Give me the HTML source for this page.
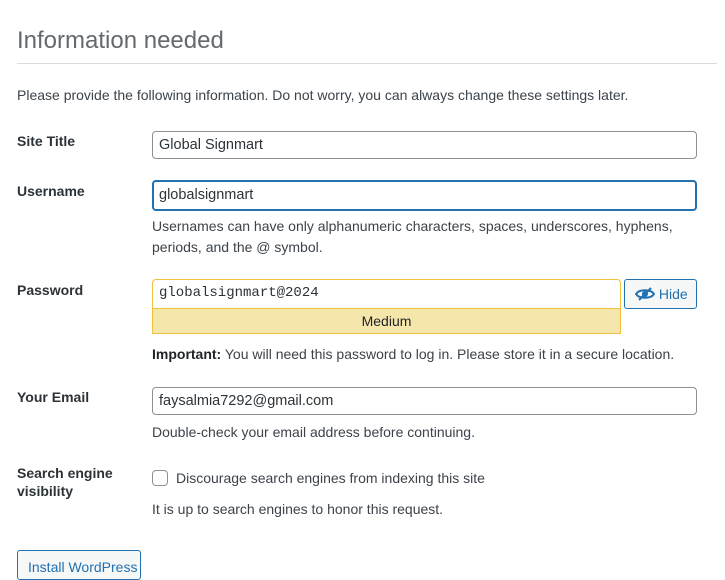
<!DOCTYPE html>
<html><head><style>
body{margin:0;background:#fff;font-family:"Liberation Sans",sans-serif;font-size:14px;color:#3c434a;width:725px;height:563px;overflow:hidden;position:relative}
.a{position:absolute}
h1{position:absolute;left:17px;top:27px;margin:0;font-size:24px;font-weight:400;color:#646970}
.hr{left:17px;top:63px;width:700px;height:1px;background:#dcdcde}
.lbl{font-weight:600;color:#2c3338;left:17px}
.in{position:absolute;left:152px;width:545px;height:28px;border:1px solid #8c8f94;border-radius:4px;box-sizing:border-box;padding-left:6px;line-height:26px;font-size:14.5px;color:#2c3338}
.d{left:152px;color:#3c434a;line-height:21px}
</style></head><body>
<h1>Information needed</h1>
<div class="a hr"></div>
<div class="a" style="left:17px;top:87px">Please provide the following information. Do not worry, you can always change these settings later.</div>
<div class="a lbl" style="top:133px">Site Title</div>
<div class="in" style="top:131px">Global Signmart</div>
<div class="a lbl" style="top:183px">Username</div>
<div class="in" style="top:180px;height:31px;border:2px solid #2271b1;line-height:27px;padding-left:5px">globalsignmart</div>
<div class="a d" style="top:216px;width:545px">Usernames can have only alphanumeric characters, spaces, underscores, hyphens, periods, and the @ symbol.</div>
<div class="a lbl" style="top:282px">Password</div>
<div class="in" style="top:279px;width:469px;height:30px;border-color:#f0c33c;font-family:'Liberation Mono',monospace;font-size:14px;border-radius:4px 4px 0 0">globalsignmart@2024</div>
<div class="a" style="left:152px;top:308px;width:469px;height:26px;box-sizing:border-box;background:#f5e6ab;border:1px solid #f0c33c;text-align:center;line-height:24px;color:#1d2327">Medium</div>
<div class="a" style="left:624px;top:279px;width:73px;height:30px;box-sizing:border-box;border:1px solid #2271b1;border-radius:3px;background:#f6f7f7;color:#2271b1;font-size:14px;line-height:28px;padding-left:10px">
<svg width="20" height="16" viewBox="0 0 20 16" style="vertical-align:-3px"><path d="M1 8C4 3 16 3 19 8C16 13 4 13 1 8Z" fill="none" stroke="#2271b1" stroke-width="2"/><circle cx="10" cy="8" r="3" fill="#2271b1"/><path d="M4 14L16 2" stroke="#2271b1" stroke-width="2"/></svg> Hide</div>
<div class="a d" style="top:344px"><b style="color:#1d2327">Important:</b> You will need this password to log in. Please store it in a secure location.</div>
<div class="a lbl" style="top:389px">Your Email</div>
<div class="in" style="top:387px">faysalmia7292@gmail.com</div>
<div class="a d" style="top:422px">Double-check your email address before continuing.</div>
<div class="a lbl" style="top:464px;line-height:18px">Search engine<br>visibility</div>
<div class="a" style="left:152px;top:470px;width:16px;height:16px;border:1px solid #8c8f94;border-radius:4px;box-sizing:border-box"></div>
<div class="a d" style="left:176px;top:468px">Discourage search engines from indexing this site</div>
<div class="a d" style="top:499px">It is up to search engines to honor this request.</div>
<div class="a" style="left:17px;top:550px;width:124px;height:30px;border:1px solid #2271b1;border-radius:3px;background:#f6f7f7;color:#2271b1;padding:8px 10px;box-sizing:border-box;white-space:nowrap;overflow:hidden">Install WordPress</div>
</body></html>
